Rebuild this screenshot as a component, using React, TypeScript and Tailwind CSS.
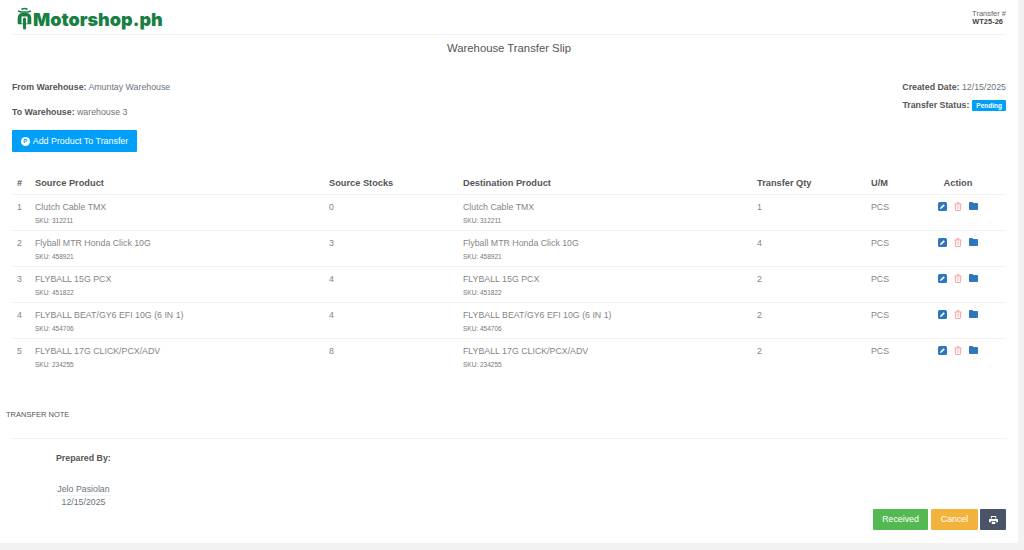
const rows = [
  { id: 1, name: "Clutch Cable TMX", sku: "312211", stock: "0", qty: 1 },
  { id: 2, name: "Flyball MTR Honda Click 10G", sku: "458921", stock: "3", qty: 4 },
  { id: 3, name: "FLYBALL 15G PCX", sku: "451822", stock: "4", qty: 2 },
  { id: 4, name: "FLYBALL BEAT/GY6 EFI 10G (6 IN 1)", sku: "454706", stock: "4", qty: 2 },
  { id: 5, name: "FLYBALL 17G CLICK/PCX/ADV", sku: "234255", stock: "8", qty: 2 },
];

function Scooter() {
  return (
    <svg width="15" height="24" viewBox="0 0 15 23" fill="none" stroke="#1a7f45" strokeWidth="1.6">
      <path d="M1 3.5 L4 4.5 H11 L14 3.5" />
      <path d="M4.5 2 Q7.5 0 10.5 2" />
      <path d="M1.5 16 V10.5 Q1.5 6 7.5 6 Q13.5 6 13.5 10.5 V16 Z" fill="#1a7f45" />
      <path d="M4.5 9 H10.5 V16 H4.5 Z" fill="#fff" stroke="none" />
      <rect x="6" y="10" width="3" height="12" rx="1.5" fill="#1a7f45" stroke="none" />
    </svg>
  );
}

function EditIcon() {
  return (
    <svg width="9" height="9" viewBox="0 0 9 9">
      <rect width="9" height="9" rx="1.5" fill="#2f77bc" />
      <path d="M2 7 L2.4 5.4 L5.6 2.2 L6.8 3.4 L3.6 6.6 Z" fill="#fff" />
    </svg>
  );
}

function TrashIcon() {
  return (
    <svg width="8" height="9" viewBox="0 0 8 9" fill="none" stroke="#f9a5a5" strokeWidth="1">
      <path d="M0.5 2 H7.5 M3 2 V0.6 H5 V2" />
      <path d="M1.2 2 L1.7 8.5 H6.3 L6.8 2" />
      <path d="M2.5 4 H5.5 M2.5 6 H5.5" strokeWidth="0.8" />
    </svg>
  );
}

function FolderIcon() {
  return (
    <svg width="9" height="8" viewBox="0 0 9 8">
      <path d="M0 1 Q0 0 1 0 H3.4 L4.4 1.1 H8 Q9 1.1 9 2 V7 Q9 8 8 8 H1 Q0 8 0 7 Z" fill="#2f77bc" />
    </svg>
  );
}

function PrintIcon() {
  return (
    <svg width="9" height="8" viewBox="0 0 10 9" fill="#fff">
      <path d="M2 0 H8 V3 H7 V1 H3 V3 H2 Z" />
      <path d="M0 3.5 H10 V7 H8 V5.5 H2 V7 H0 Z" />
      <rect x="3" y="6.5" width="4" height="2.5" />
    </svg>
  );
}

export default function App() {
  return (
    <div className="h-[550px] w-[1024px] overflow-hidden bg-[#f2f2f2] font-['Liberation_Sans',sans-serif] text-[8.8px] text-[#6b747b]">
      <div className="flex h-[543px] w-[1018px] flex-col bg-white">
        <div className="mx-[12px] flex h-[35px] items-center justify-between border-b border-[#f1f3f4]">
          <div className="flex items-center pt-[3px] pl-[5px]">
            <Scooter />
            <span className="mt-[3px] ml-px font-['Inter',sans-serif] text-[18px] leading-none font-black text-[#1a7f45]">Motorshop.ph</span>
          </div>
          <div className="pt-[2px] text-right text-[7.5px] leading-[8px] text-[#666]">
            <div>Transfer #</div>
            <div className="pr-[3px] font-bold text-[#444]">WT25-26</div>
          </div>
        </div>

        <h1 className="mt-[7px] text-center text-[11.3px] leading-[13px] text-[#555]">Warehouse Transfer Slip</h1>

        <div className="mx-[12px] mt-[27px] flex justify-between">
          <div className="leading-[11px]">
            <p><b className="text-[#555]">From Warehouse:</b> Amuntay Warehouse</p>
            <p className="mt-[14px]"><b className="text-[#555]">To Warehouse:</b> warehouse 3</p>
            <button className="mt-[12px] flex h-[22px] w-[125px] items-center justify-center gap-[3px] rounded-[1px] bg-[#00a0fa] text-[8.9px] text-white">
              <span className="flex h-[9px] w-[9px] items-center justify-center rounded-full bg-white text-[6px] font-bold text-[#00a0fa]">P</span>
              Add Product To Transfer
            </button>
          </div>
          <div className="text-right leading-[11px]">
            <p><b className="text-[#555]">Created Date:</b> 12/15/2025</p>
            <p className="mt-[7px]">
              <b className="text-[#555]">Transfer Status:</b>
              <span className="ml-[3px] inline-block rounded-[1px] bg-[#00a0fa] px-[4px] text-[6.5px] leading-[11px] font-bold text-white">Pending</span>
            </p>
          </div>
        </div>

        <table className="mx-[12px] mt-[20px] w-[994px] table-fixed border-collapse text-left">
          <thead>
            <tr className="h-[22px] border-b border-[#f1f3f4] text-[9.25px] font-bold text-[#555]">
              <th className="w-[18px] pt-[2px] pl-[5px]">#</th>
              <th className="w-[294px] pt-[2px] pl-[5px]">Source Product</th>
              <th className="w-[134px] pt-[2px] pl-[5px]">Source Stocks</th>
              <th className="w-[294px] pt-[2px] pl-[5px]">Destination Product</th>
              <th className="w-[114px] pt-[2px] pl-[5px]">Transfer Qty</th>
              <th className="w-[50px] pt-[2px] pl-[5px]">U/M</th>
              <th className="pt-[2px] pr-[6px] text-center">Action</th>
            </tr>
          </thead>
          <tbody>
            {rows.map((row) => (
              <tr key={row.id} className="h-[36px] border-b border-[#f1f3f4] align-top text-[#858585] last:border-b-0">
                <td className="pt-[7px] pl-[5px] leading-[11px]">{row.id}</td>
                <td className="pt-[7px] pl-[5px] leading-[11px]">
                  {row.name}
                  <div className="mt-[4px] text-[6.5px] leading-[8px] text-[#777]">SKU: {row.sku}</div>
                </td>
                <td className="pt-[7px] pl-[5px] leading-[11px]">{row.stock}</td>
                <td className="pt-[7px] pl-[5px] leading-[11px]">
                  {row.name}
                  <div className="mt-[4px] text-[6.5px] leading-[8px] text-[#777]">SKU: {row.sku}</div>
                </td>
                <td className="pt-[7px] pl-[5px] leading-[11px]">{row.qty}</td>
                <td className="pt-[7px] pl-[5px] leading-[11px]">PCS</td>
                <td className="pt-[7px] pl-[22px]">
                  <div className="flex items-center gap-[7px]">
                    <EditIcon />
                    <TrashIcon />
                    <FolderIcon />
                  </div>
                </td>
              </tr>
            ))}
          </tbody>
        </table>

        <p className="mt-[36px] ml-[6px] text-[7.5px] leading-[9px] text-[#555]">TRANSFER NOTE</p>

        <div className="mx-[11px] mt-[19px] flex flex-1 items-end justify-between border-t border-[#f1f3f4] pb-[13px]">
          <div className="mb-[21px] ml-[45px] w-[55px] self-end text-center">
            <p className="mb-[19px] text-left leading-[11px] font-bold whitespace-nowrap text-[#555]">Prepared By:</p>
            <p className="border-b border-[#f1f3f4] leading-[12px] whitespace-nowrap">Jelo Pasiolan</p>
            <p className="leading-[13px]">12/15/2025</p>
          </div>
          <div className="flex gap-[3px] pr-px">
            <button className="h-[21px] w-[55px] rounded-[1px] bg-[#55b951] text-white">Received</button>
            <button className="h-[21px] w-[47px] rounded-[1px] bg-[#f3b23c] text-white">Cancel</button>
            <button className="ml-[-1px] flex h-[21px] w-[26px] items-center justify-center rounded-[1px] bg-[#4a5368]"><PrintIcon /></button>
          </div>
        </div>
      </div>
    </div>
  );
}
